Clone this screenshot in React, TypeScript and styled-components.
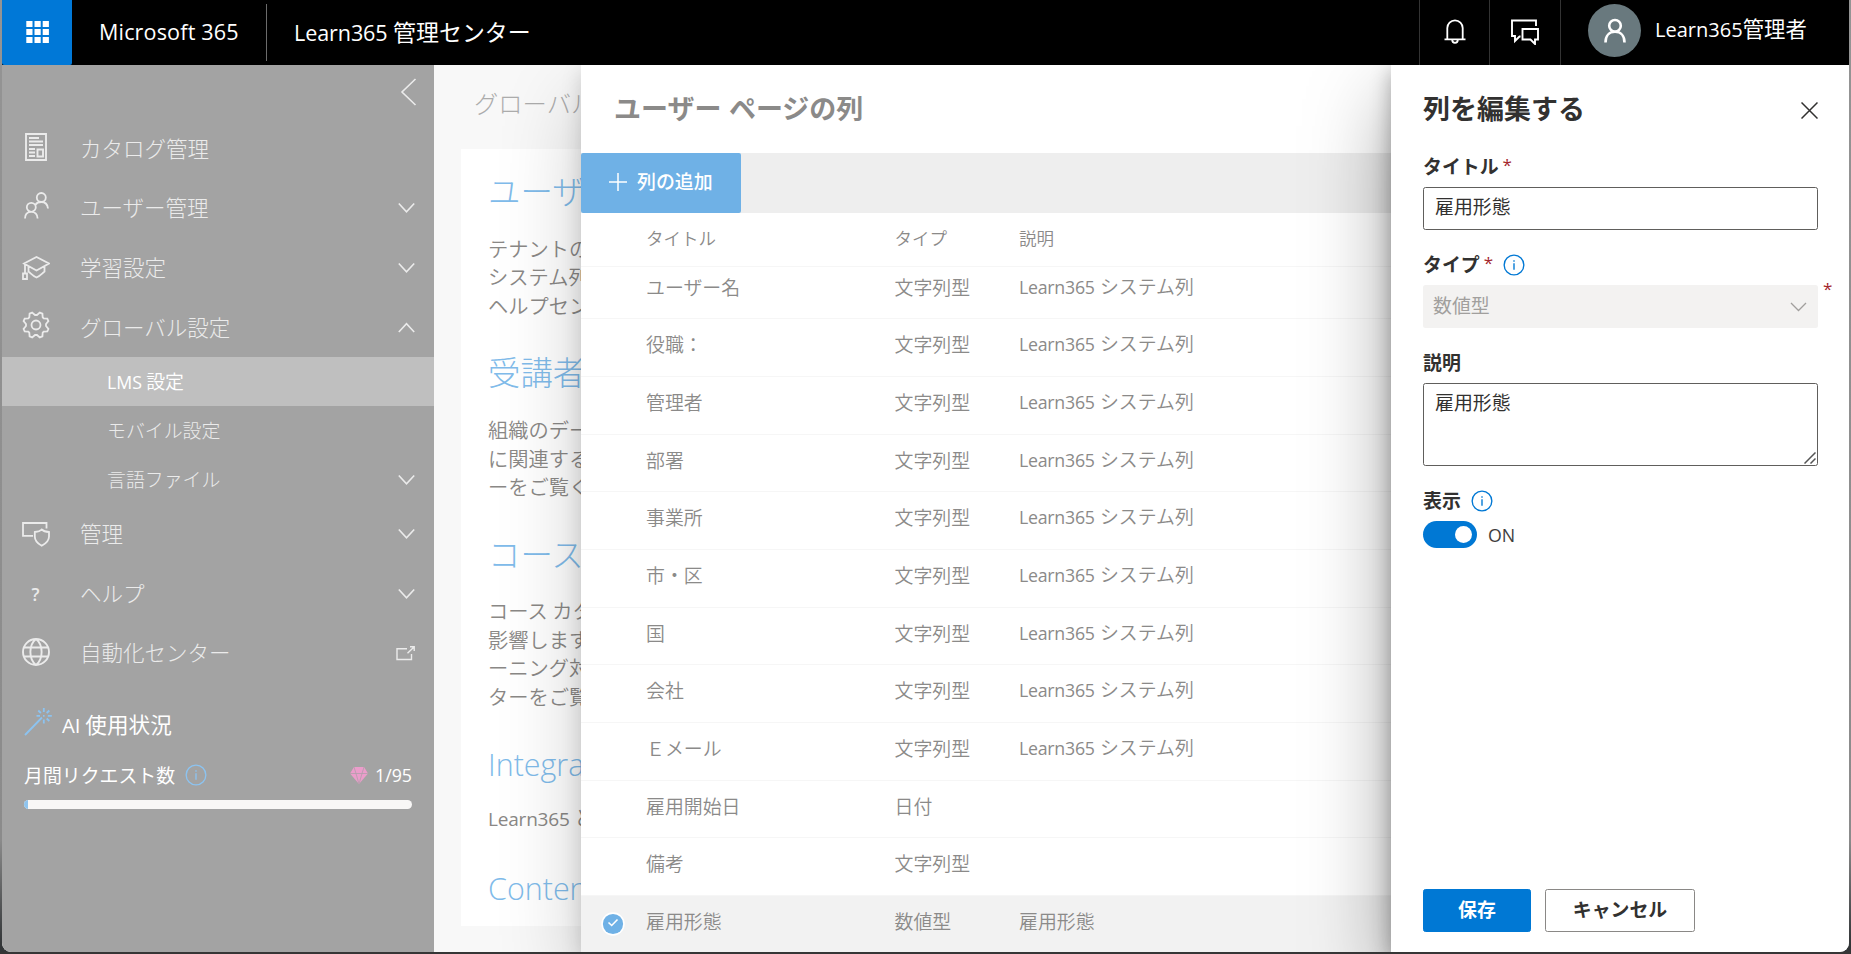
import React from "react";
import styled, { createGlobalStyle, css } from "styled-components";

const Global = createGlobalStyle`
  * { box-sizing: border-box; }
  html, body { margin: 0; height: 954px; overflow: hidden; }
  body {
    background: linear-gradient(#949494, #8b8b8b 88%, #333638 99%);
    font-family: "Noto Sans CJK JP", "Open Sans", sans-serif;
    font-size: 18.9px;
    color: #323130;
  }
  button, input, textarea { font: inherit; color: inherit; }
`;

const Desktop = styled.div`
  width: 1851px;
  height: 954px;
  padding: 0 2px;
  border-bottom: 2px solid #363636;
`;

const Window = styled.div`
  height: 952px;
  display: flex;
  flex-direction: column;
  overflow: hidden;
  background: #f8f8f8;
  border-radius: 0 0 9px 9px;
`;

const Latin = styled.span<{ $track?: number; $weight?: number }>`
  font-family: "Open Sans", sans-serif;
  font-size: 0.94em;
  letter-spacing: ${(p) => p.$track ?? 0}px;
  ${(p) => p.$weight && `font-weight: ${p.$weight};`}
`;

/* ---------- top bar ---------- */

const TopBar = styled.header`
  flex: none;
  position: relative;
  z-index: 3;
  height: 65px;
  display: flex;
  align-items: center;
  background: #000;
  color: #fff;
`;

const Launcher = styled.button`
  width: 70px;
  height: 65px;
  border: 0;
  padding: 0 0 1px 2px;
  display: grid;
  place-items: center;
  background: #0078d7;
  border-radius: 0 0 2px 2px;
`;

const Suite = styled.div`
  width: 195px;
  height: 57px;
  padding: 0 0 3px 27px;
  display: flex;
  align-items: center;
  border-right: 1px solid #6b6b6b;
  font-size: 22.95px;
`;

const ProductName = styled.div`
  flex: 1;
  padding: 0 0 4px 27px;
  font-size: 22.95px;
  white-space: pre;
`;

const BarButton = styled.div<{ $w: number }>`
  width: ${(p) => p.$w}px;
  height: 65px;
  padding-bottom: 2px;
  border-left: 1px solid #333;
  display: grid;
  place-items: center;
`;

const Account = styled.div`
  width: 289px;
  height: 65px;
  border-left: 1px solid #333;
  padding: 0 0 5px 27px;
  display: flex;
  align-items: center;
  gap: 14px;
  font-size: 21.33px;
  line-height: 28px;
  white-space: nowrap;
`;

const AccountName = styled.span`
  padding-bottom: 2px;
`;

const Avatar = styled.div`
  width: 53px;
  height: 53px;
  border-radius: 50%;
  background: #69797e;
  display: grid;
  place-items: center;
`;

/* ---------- body ---------- */

const Body = styled.div`
  flex: 1;
  min-height: 0;
  display: flex;
`;

const Sidebar = styled.nav`
  flex: none;
  width: 432px;
  background: #a3a3a3;
  color: #ebebeb;
  display: flex;
  flex-direction: column;
`;

const Collapse = styled.div`
  height: 54px;
  padding: 13px 17px 0 0;
  display: flex;
  justify-content: flex-end;
`;

const NavItem = styled.div`
  height: 59.6px;
  flex: none;
  display: flex;
  align-items: center;
  padding: 0 19px 3px 18px;
  font-size: 21.5px;
  font-weight: 300;
`;

const NavIcon = styled.span<{ $shift?: number }>`
  width: 32px;
  height: 34px;
  margin-top: ${(p) => p.$shift ?? 0}px;
  display: grid;
  place-items: center;
`;

const Question = styled.span`
  padding-right: 1px;
  font: 600 17.5px "Open Sans", sans-serif;
`;

const NavLabel = styled.span`
  flex: 1;
  margin-left: 28px;
`;

const NavEnd = styled.span`
  margin-top: 3px;
  line-height: 0;
`;

const SubItem = styled.div<{ $active?: boolean }>`
  height: 49px;
  flex: none;
  display: flex;
  align-items: center;
  justify-content: space-between;
  padding: 0 19px 3px 105px;
  font-size: 18.9px;
  font-weight: 300;
  ${(p) =>
    p.$active &&
    css`
      background: #bfbfbf;
      color: #fff;
      font-weight: 350;
    `}
`;

const Usage = styled.section`
  margin-top: 16px;
  padding: 0 22px;
  color: #fff;
`;

const UsageTitle = styled.div`
  height: 48px;
  display: flex;
  align-items: center;
  gap: 9px;
  font-size: 21.6px;
`;

const WandSlot = styled.span`
  line-height: 0;
  padding-bottom: 3px;
`;

const UsageRow = styled.div`
  height: 50px;
  margin-top: 3px;
  display: flex;
  align-items: center;
  gap: 10px;
`;

const UsageLabel = styled.span`
  padding-bottom: 1px;
`;

const Count = styled.span`
  margin-left: auto;
  display: flex;
  align-items: center;
  gap: 7px;
`;

const Meter = styled.div`
  height: 9px;
  border-radius: 5px;
  overflow: hidden;
  background: #f8f7f6;
`;

const MeterFill = styled.div`
  width: 4px;
  height: 9px;
  background: #8fc4ee;
`;

/* ---------- page behind the panels ---------- */

const Page = styled.main`
  flex: none;
  width: 147px;
  overflow: hidden;
  background: #f8f8f8;
  white-space: nowrap;
`;

const PageTitle = styled.div`
  height: 84px;
  padding: 19px 0 0 40px;
  font-size: 24.3px;
  line-height: 38px;
  font-weight: 300;
  color: #acacac;
`;

const Card = styled.div`
  height: 777px;
  margin-left: 27px;
  padding-left: 27px;
  background: #fff;
`;

const CardTitle = styled.h2<{ $top: number }>`
  margin: 0;
  padding-top: ${(p) => p.$top}px;
  line-height: 44px;
  font-size: 32.4px;
  font-weight: 200;
  color: #80bbea;
`;

const CardText = styled.p<{ $top: number }>`
  margin: 0;
  padding-top: ${(p) => p.$top}px;
  font-size: 20.25px;
  line-height: 28.4px;
  font-weight: 350;
  color: #8a8886;
  white-space: pre;
`;

/* ---------- columns panel ---------- */

const ListPanel = styled.section`
  flex: none;
  position: relative;
  z-index: 1;
  width: 810px;
  background: #fff;
  color: #8b8a89;
  display: flex;
  flex-direction: column;
  box-shadow: 0 34px 78px rgba(0, 0, 0, 0.2), 0 6px 19px rgba(0, 0, 0, 0.15);
`;

const ListTitle = styled.h1`
  flex: none;
  height: 88px;
  margin: 0;
  padding-left: 33px;
  line-height: 85px;
  font-size: 27px;
  font-weight: 700;
  word-spacing: 1.3px;
`;

const Toolbar = styled.div`
  flex: none;
  height: 60px;
  background: #eee;
`;

const AddButton = styled.button`
  width: 160px;
  height: 60px;
  border: 0;
  border-radius: 2px;
  padding: 0 0 2px 27px;
  display: flex;
  align-items: center;
  gap: 9px;
  background: #6fb1e6;
  color: #fff;
  font-weight: 500;
`;

const AddLabel = styled.span`
  padding-bottom: 3px;
`;

const Row = styled.div<{ $head?: boolean; $first?: boolean; $selected?: boolean }>`
  flex: none;
  height: ${(p) => (p.$head ? 54.3 : p.$first ? 52 : 57.67)}px;
  display: grid;
  grid-template-columns: 65px 248.5px 124.5px 1fr;
  align-items: end;
  padding-bottom: ${(p) => (p.$head ? 14 : 17.6)}px;
  border-bottom: 1px solid #f6f6f6;
  line-height: 28px;
  font-size: ${(p) => (p.$head ? 17.5 : 18.9)}px;
  font-weight: 350;
  word-spacing: 1px;
  background: ${(p) => (p.$selected ? "#f2f2f2" : "#fff")};
`;

const CheckCell = styled.span`
  height: 23px;
  padding-left: 20px;
  line-height: 0;
`;

/* ---------- edit panel ---------- */

const EditPanel = styled.aside`
  flex: 1;
  position: relative;
  z-index: 2;
  background: #fff;
  padding: 0 31px 20px 32px;
  display: flex;
  flex-direction: column;
  box-shadow: 0 34px 78px rgba(0, 0, 0, 0.36), 0 6px 19px rgba(0, 0, 0, 0.3);
`;

const EditHead = styled.div`
  height: 88px;
  padding-bottom: 4px;
  display: flex;
  align-items: center;
  justify-content: space-between;
  font-size: 27px;
  font-weight: 700;
`;

const CloseSlot = styled.span`
  margin-top: 7px;
  line-height: 0;
`;

const Label = styled.label<{ $h: number }>`
  height: ${(p) => p.$h}px;
  padding-bottom: 1.5px;
  display: flex;
  align-items: flex-end;
  line-height: 28px;
  font-weight: 700;
`;

const Star = styled.span`
  margin-left: 4px;
  color: #a4262c;
  font: 17px/30px "Open Sans", sans-serif;
`;

const Tip = styled.span`
  margin-left: 10px;
  height: 24px;
  line-height: 0;
`;

const TextInput = styled.input`
  margin-top: 6px;
  height: 43px;
  border: 1px solid #605e5c;
  border-radius: 2.5px;
  padding: 0 12px 6px 11px;
  outline: 0;
`;

const SelectWrap = styled.div`
  margin-top: 6px;
  position: relative;
`;

const Select = styled.div`
  height: 43px;
  border-radius: 2.5px;
  padding: 0 11px 0 10px;
  display: flex;
  align-items: center;
  justify-content: space-between;
  background: #f3f2f1;
  color: #a19f9d;
`;

const SelectValue = styled.span`
  padding-bottom: 5px;
`;

const OuterStar = styled(Star)`
  position: absolute;
  left: 400px;
  top: -11px;
  margin: 0;
`;

const AreaWrap = styled.div`
  margin-top: 6px;
  height: 83px;
  position: relative;
  display: flex;
`;

const TextArea = styled.textarea`
  flex: 1;
  border: 1px solid #605e5c;
  border-radius: 2.5px;
  padding: 4px 11px;
  line-height: 27px;
  outline: 0;
  resize: none;
`;

const Grip = styled.span`
  position: absolute;
  right: 2px;
  bottom: 2px;
  line-height: 0;
`;

const ToggleRow = styled.div`
  margin-top: 6px;
  display: flex;
  align-items: center;
  gap: 11px;
  height: 27px;
`;

const ToggleText = styled.span`
  padding-bottom: 2px;
  color: #3f3e3d;
`;

const Toggle = styled.span`
  width: 54px;
  height: 27px;
  border-radius: 14px;
  padding: 5px;
  display: flex;
  justify-content: flex-end;
  background: #0078d4;
  &::before {
    content: "";
    width: 17px;
    height: 17px;
    border-radius: 50%;
    background: #fff;
  }
`;

const Actions = styled.div`
  margin-top: auto;
  display: flex;
  gap: 14px;
`;

const ActionButton = styled.button<{ $primary?: boolean }>`
  width: ${(p) => (p.$primary ? 108 : 150)}px;
  height: 43px;
  padding: 0 0 4px;
  border-radius: 2.5px;
  border: 1px solid ${(p) => (p.$primary ? "#0078d4" : "#8a8886")};
  background: ${(p) => (p.$primary ? "#0078d4" : "#fff")};
  color: ${(p) => (p.$primary ? "#fff" : "#323130")};
  font-weight: 700;
`;

/* ---------- drawings ---------- */

const Line = ({ w, h, vb, d, sw = 1.4, color = "currentColor" }: { w: number; h: number; vb?: string; d: string; sw?: number; color?: string }) => (
  <svg width={w} height={h} viewBox={vb ?? `0 0 ${w} ${h}`} fill="none" stroke={color} strokeWidth={sw}>
    <path d={d} />
  </svg>
);

const Down = () => <NavEnd><Line w={17} h={12} d="M.8 1.5 8.5 9.8 16.2 1.5" sw={1.6} /></NavEnd>;
const Up = () => <NavEnd><Line w={17} h={12} d="M.8 10 8.5 1.7 16.2 10" sw={1.6} /></NavEnd>;

const Info = ({ color = "#0078d4" }: { color?: string }) => (
  <svg width="22" height="22" viewBox="0 0 21 21" fill="none" stroke={color} strokeWidth="1.3">
    <circle cx="10.5" cy="10.5" r="9.4" />
    <path d="M10.5 8.8v6.2M10.5 6v1.5" />
  </svg>
);

const WaffleIcon = () => (
  <svg width="24" height="22" viewBox="0 0 24 22" fill="#fff">
    {[0, 8, 16].map((y) =>
      [0, 8.2, 16.4].map((x) => <rect key={`${x}-${y}`} x={x + 0.3} y={y} width="6.2" height="6" />)
    )}
  </svg>
);

const CatalogIcon = () => (
  <Line w={22} h={28} sw={1.9} d="M1 1H21V27H1ZM4 5H14M4 8.5H18M4 12H18M4 16H10M4 19.5H10M4 23H10M12.5 16.5H18V23.5H12.5Z" />
);
const UsersIcon = () => (
  <Line
    w={25}
    h={27}
    sw={1.8}
    d="M1 26.5C1 21.5 3.4 19.8 7.3 19.8S13.4 21.5 13.6 26.5M7.3 19.8A4.5 4.5 0 1 1 7.3 10.8A4.5 4.5 0 0 1 7.3 19.8M17.3 10A4.5 4.5 0 1 1 17.3 1A4.5 4.5 0 0 1 17.3 10M11.5 12.8C12.8 10.6 14.6 10 17.3 10C21.5 10 23.6 12.5 24 16.5"
  />
);
const CapIcon = () => (
  <Line w={28} h={24} sw={1.8} d="M2 7.5 14.5 1 27 7.5 14.5 14.5ZM6.5 10.5V15.5C9 17.5 11 20 14.5 21.5C18 20 20 17.5 22.5 15.5V10.5M3 8.5V17M1 17.5H5V23H1Z" />
);
const GearIcon = () => (
  <Line
    w={28}
    h={28}
    sw={1.8}
    d="M10.2 1.6 13 4H15L17.8 1.6 20.4 2.7 20.7 6.3 21.7 7.3 25.3 7.6 26.4 10.2 24 13V15L26.4 17.8 25.3 20.4 21.7 20.7 20.7 21.7 20.4 25.3 17.8 26.4 15 24H13L10.2 26.4 7.6 25.3 7.3 21.7 6.3 20.7 2.7 20.4 1.6 17.8 4 15V13L1.6 10.2 2.7 7.6 6.3 7.3 7.3 6.3 7.6 2.7ZM14 9.5A4.5 4.5 0 1 1 14 18.5A4.5 4.5 0 0 1 14 9.5"
  />
);
const AdminIcon = () => (
  <Line w={28} h={25} sw={1.8} d="M24.5 6.5V1H1V13.8H11M19.7 7.5C18 9.3 15.5 9.8 12.8 10V14.5C12.8 19 15.5 21.5 19.7 23.8C24 21.5 27 19 27 14.5V10C24 9.8 21.5 9.3 19.7 7.5Z" />
);
const GlobeIcon = () => (
  <Line
    w={28}
    h={28}
    sw={1.9}
    d="M14 1A13 13 0 1 1 14 27A13 13 0 0 1 14 1M14 1C6.5 7 6.5 21 14 27C21.5 21 21.5 7 14 1M2.2 9.5H25.8M2.2 18.5H25.8"
  />
);
const OpenIcon = () => (
  <NavEnd><Line w={19} h={15} sw={1.4} d="M11 2.8H1V13.5H15.5V8M11.5 7.2 18 1M14 .8H18.2V5" /></NavEnd>
);
const WandIcon = () => (
  <Line w={29} h={28} color="#8cc3f0" sw={1.8} d="M1 27 18 9.5M19.8 0V4M19.8 11.5V15.5M12.5 7.8H16M23.8 7.8H27.8M14.3 2.5 16.9 5M25.3 2.5 22.7 5M22.7 10.5 25.3 13M19 7.8H20.6" />
);
const GemIcon = () => (
  <svg width="18" height="17" viewBox="0 0 18 17">
    <path d="M4 0H14L18 6.5 9 17 0 6.5Z" fill="#eb9dcb" />
    <path d="M0 6.5H18M4 0 6 6.5 9 17 12 6.5 14 0" stroke="#b79fae" strokeWidth=".9" fill="none" />
  </svg>
);
const BellIcon = () => (
  <Line w={22} h={25} sw={1.8} d="M.5 20.3H21.5M3.3 20.3V9A7.7 7.7 0 0 1 18.7 9V20.3M8.2 20.8C8.2 24.8 13.8 24.8 13.8 20.8" />
);
const ChatIcon = () => (
  <Line w={28} h={26} sw={1.9} d="M25 7V1.5H1V17H4V22L8.5 17.5H9.5M11.5 10H27V20.5H24V25L19.5 20.5H11.5Z" />
);
const PersonIcon = () => (
  <Line w={24} h={26} sw={2.6} d="M12 3A5.8 5.8 0 1 1 12 14.6A5.8 5.8 0 0 1 12 3M2.5 25.5C2.5 18.5 6.5 14.8 12 14.8S21.5 18.5 21.5 25.5" />
);
const CheckIcon = () => (
  <svg width="24" height="24" viewBox="0 0 24 24">
    <circle cx="12" cy="12" r="11.7" fill="#fff" />
    <circle cx="12" cy="12" r="10.1" fill="#6fb1e6" />
    <path d="M7.5 10.5 10.7 13.5 16.5 7.5" fill="none" stroke="#fff" strokeWidth="1.6" />
  </svg>
);

const SYSTEM = "Learn365 システム列";
const rows: [string, string, string][] = [
  ["ユーザー名", "文字列型", SYSTEM],
  ["役職：", "文字列型", SYSTEM],
  ["管理者", "文字列型", SYSTEM],
  ["部署", "文字列型", SYSTEM],
  ["事業所", "文字列型", SYSTEM],
  ["市・区", "文字列型", SYSTEM],
  ["国", "文字列型", SYSTEM],
  ["会社", "文字列型", SYSTEM],
  ["Ｅメール", "文字列型", SYSTEM],
  ["雇用開始日", "日付", ""],
  ["備考", "文字列型", ""],
  ["雇用形態", "数値型", "雇用形態"],
];

const withLatin = (s: string) =>
  s.startsWith("Learn365") ? (
    <span>
      <Latin $weight={400} $track={-0.25}>Learn365</Latin>
      {s.slice(8)}
    </span>
  ) : (
    <span>{s}</span>
  );

export default function App() {
  return (
    <>
      <Global />
      <Desktop>
        <Window>
          <TopBar>
            <Launcher><WaffleIcon /></Launcher>
            <Suite><Latin $track={0.15}>Microsoft 365</Latin></Suite>
            <ProductName><Latin $track={-0.1}>Learn365 </Latin>管理センター</ProductName>
            <BarButton $w={70}><BellIcon /></BarButton>
            <BarButton $w={71}><ChatIcon /></BarButton>
            <Account>
              <Avatar><PersonIcon /></Avatar>
              <AccountName><Latin>Learn365</Latin>管理者</AccountName>
            </Account>
          </TopBar>
          <Body>
            <Sidebar>
              <Collapse><Line w={17} h={28} sw={1.6} d="M15.5 1 2 14 15.5 27" /></Collapse>
              <NavItem><NavIcon><CatalogIcon /></NavIcon><NavLabel>カタログ管理</NavLabel></NavItem>
              <NavItem><NavIcon $shift={-3}><UsersIcon /></NavIcon><NavLabel>ユーザー管理</NavLabel><Down /></NavItem>
              <NavItem><NavIcon $shift={3}><CapIcon /></NavIcon><NavLabel>学習設定</NavLabel><Down /></NavItem>
              <NavItem><NavIcon $shift={-2}><GearIcon /></NavIcon><NavLabel>グローバル設定</NavLabel><Up /></NavItem>
              <SubItem $active><span><Latin $weight={400}>LMS</Latin> 設定</span></SubItem>
              <SubItem>モバイル設定</SubItem>
              <SubItem>言語ファイル<Down /></SubItem>
              <NavItem><NavIcon $shift={3}><AdminIcon /></NavIcon><NavLabel>管理</NavLabel><Down /></NavItem>
              <NavItem><NavIcon $shift={3}><Question>?</Question></NavIcon><NavLabel>ヘルプ</NavLabel><Down /></NavItem>
              <NavItem><NavIcon><GlobeIcon /></NavIcon><NavLabel>自動化センター</NavLabel><OpenIcon /></NavItem>
              <Usage>
                <UsageTitle><WandSlot><WandIcon /></WandSlot><span><Latin>AI</Latin> 使用状況</span></UsageTitle>
                <UsageRow>
                  <UsageLabel>月間リクエスト数</UsageLabel><Info color="#8cc3f0" />
                  <Count><GemIcon /><Latin>1/95</Latin></Count>
                </UsageRow>
                <Meter><MeterFill /></Meter>
              </Usage>
            </Sidebar>
            <Page>
              <PageTitle>グローバル</PageTitle>
              <Card>
                <CardTitle $top={19}>ユーザ</CardTitle>
                <CardText $top={23}>{"テナントの\nシステム列\nヘルプセン"}</CardText>
                <CardTitle $top={29}>受講者</CardTitle>
                <CardText $top={23}>{"組織のデー\nに関連する\nーをご覧く"}</CardText>
                <CardTitle $top={30}>コース</CardTitle>
                <CardText $top={22}>{"コース カタ\n影響します\nーニング対\nターをご覧"}</CardText>
                <CardTitle $top={29}><Latin $weight={300}>Integra</Latin></CardTitle>
                <CardText $top={18}><Latin $weight={400} $track={-0.2}>Learn365</Latin> と</CardText>
                <CardTitle $top={31}><Latin $weight={300}>Conten</Latin></CardTitle>
              </Card>
            </Page>
            <ListPanel>
              <ListTitle>ユーザー ページの列</ListTitle>
              <Toolbar>
                <AddButton><Line w={20} h={20} sw={1.5} d="M10 1V19M1 10H19" /><AddLabel>列の追加</AddLabel></AddButton>
              </Toolbar>
              <Row $head><span /><span>タイトル</span><span>タイプ</span><span>説明</span></Row>
              {rows.map(([title, type, note], i) => (
                <Row key={title} $first={i === 0} $selected={i === rows.length - 1}>
                  <CheckCell>{i === rows.length - 1 && <CheckIcon />}</CheckCell>
                  <span>{title}</span>
                  <span>{type}</span>
                  {withLatin(note)}
                </Row>
              ))}
            </ListPanel>
            <EditPanel>
              <EditHead>列を編集する<CloseSlot><Line w={17} h={17} sw={1.5} d="M.5 .5 16.5 16.5M16.5 .5 .5 16.5" /></CloseSlot></EditHead>
              <Label $h={28}>タイトル<Star>*</Star></Label>
              <TextInput defaultValue="雇用形態" />
              <Label $h={49}>タイプ<Star>*</Star><Tip><Info /></Tip></Label>
              <SelectWrap>
                <Select><SelectValue>数値型</SelectValue><Line w={17} h={10} sw={1.3} d="M1 1 8.5 8.5 16 1" /></Select>
                <OuterStar>*</OuterStar>
              </SelectWrap>
              <Label $h={49}>説明</Label>
              <AreaWrap>
                <TextArea defaultValue="雇用形態" />
                <Grip><Line w={12} h={12} sw={1.5} color="#555" d="M.5 11.5 11.5 .5M6.5 11.5 11.5 6.5" /></Grip>
              </AreaWrap>
              <Label $h={49}>表示<Tip><Info /></Tip></Label>
              <ToggleRow><Toggle /><ToggleText><Latin>ON</Latin></ToggleText></ToggleRow>
              <Actions>
                <ActionButton $primary>保存</ActionButton>
                <ActionButton>キャンセル</ActionButton>
              </Actions>
            </EditPanel>
          </Body>
        </Window>
      </Desktop>
    </>
  );
}
